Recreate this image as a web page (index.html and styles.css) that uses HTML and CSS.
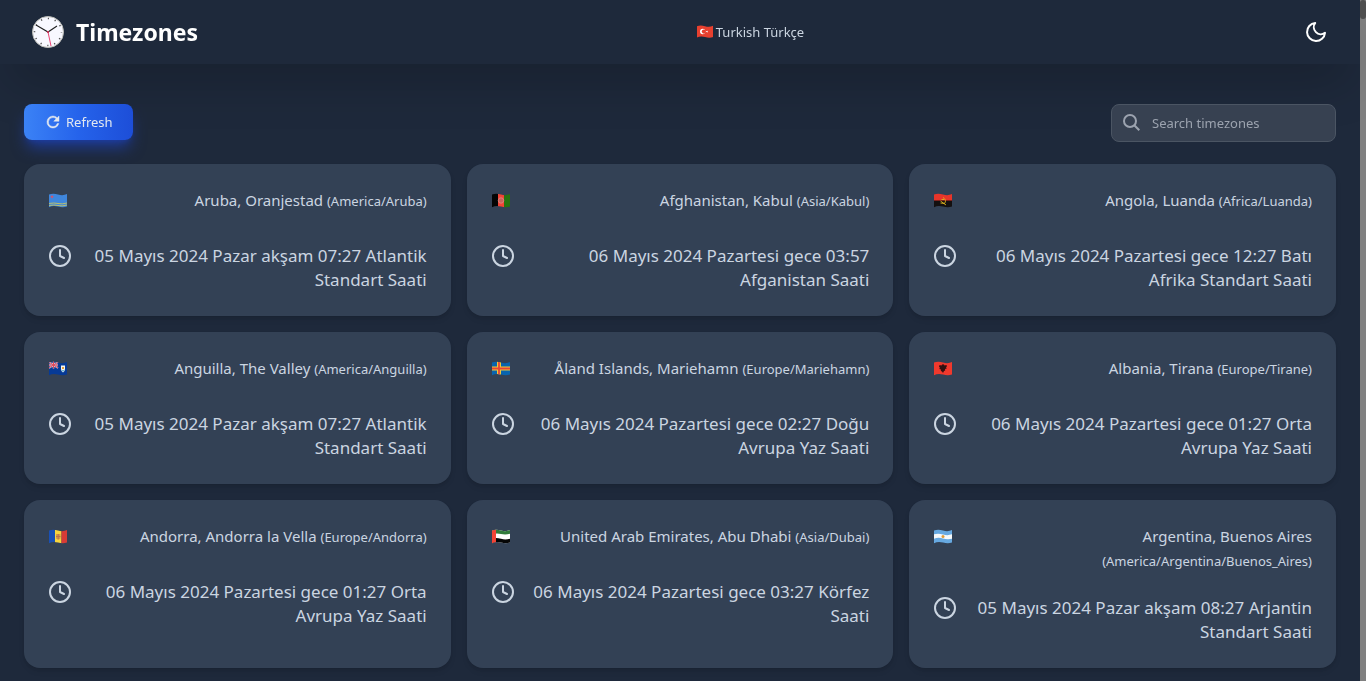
FILE: index.html
```html
<!DOCTYPE html>
<html lang="en">
<head>
<meta charset="utf-8">
<title>Timezones</title>
<link rel="stylesheet" href="styles.css">
</head>
<body>
<svg class="defs" aria-hidden="true">
  <symbol id="clock" viewBox="0 0 24 24"><circle cx="12" cy="12" r="10"/><path d="M12 6v6l4 2"/></symbol>
  <clipPath id="wave"><path d="M1 3.500Q5 2 10 3.500T19 3V15.500Q15 17 10 15.500T1 16.200Z"/></clipPath>
</svg>
<header class="header">
  <h1 class="brand">
    <svg class="logo" viewBox="0 0 32 32" aria-hidden="true">
      <circle cx="16" cy="16" r="15.500" fill="#f8f8ff" stroke="#bdbdb8"/>
      <circle cx="16" cy="16" r="13.500" fill="none" stroke="#555" stroke-width="1.600" stroke-dasharray="1.200 5.870" stroke-dashoffset=".6"/>
      <path d="M4 9l12 7 9-6" fill="none" stroke="#222" stroke-width="1.100"/>
      <path d="M15.800 15l3.200 15" stroke="#ec4474" stroke-width="1"/>
      <circle cx="16" cy="16" r="1" fill="#c02c50"/>
    </svg>
    <span>Timezones</span>
  </h1>
  <button class="language" type="button">
    <svg class="flag-small" viewBox="0 0 20 20" aria-hidden="true"><g clip-path="url(#wave)"><path fill="#e8402f" d="M0 0h20v20H0z"/><circle cx="7.500" cy="9.500" r="3" fill="#fff"/><circle cx="8.800" cy="9.500" r="2.400" fill="#e8402f"/><path fill="#fff" d="M10.500 9.500l2.500-1v2z"/></g></svg>
    <span>Turkish Türkçe</span>
  </button>
  <button class="theme" type="button" aria-label="Toggle theme">
    <svg class="line-icon" viewBox="0 0 24 24"><path d="M21 12.790A9 9 0 1 1 11.210 3 7 7 0 0 0 21 12.790z"/></svg>
  </button>
</header>
<main class="main">
  <div class="toolbar">
    <button class="refresh" type="button">
      <svg class="refresh-icon" viewBox="0 0 24 24" aria-hidden="true"><path fill="currentColor" stroke="currentColor" stroke-width=".6" d="M17.650 6.350A7.960 7.960 0 0 0 12 4a8 8 0 1 0 7.730 10h-2.080A6 6 0 1 1 12 6c1.660 0 3.140.690 4.220 1.780L13 11h7V4z"/></svg>
      <span>Refresh</span>
    </button>
    <label class="search">
      <svg class="search-icon" viewBox="0 0 20 20" aria-hidden="true"><circle cx="8" cy="8" r="6"/><path d="M12.300 12.300l5 5"/></svg>
      <input class="search-input" type="search" placeholder="Search timezones" aria-label="Search timezones">
    </label>
  </div>
  <section class="grid">
    <article class="card">
      <div class="place"><svg class="flag" viewBox="0 0 20 20"><g clip-path="url(#wave)"><path fill="#3f86dc" d="M0 0h20v20H0z"/><path stroke="#d9cd50" stroke-width=".8" d="M1 12.500q5-1 9 0t9-.5M1 14.500q5-1 9 0t9-.5" fill="none"/><path fill="#e84c58" d="M4 4l.6 1.200 1.200.6-1.200.6L4 7.600l-.6-1.200-1.200-.6 1.200-.6z"/></g></svg>
        <p class="name">Aruba, Oranjestad <small class="zone">(America/Aruba)</small></p></div>
      <div class="time"><svg class="line-icon"><use href="#clock"/></svg><time class="date">05 Mayıs 2024 Pazar akşam 07:27 Atlantik Standart Saati</time></div>
    </article>
    <article class="card">
      <div class="place"><svg class="flag" viewBox="0 0 20 20"><g clip-path="url(#wave)"><path fill="#050505" d="M0 0h7v20H0z"/><path fill="#f34335" d="M7 0h6v20H7z"/><path fill="#27720f" d="M13 0h7v20h-7z"/><circle cx="10" cy="9.500" r="2.700" fill="#c8635b" stroke="#e08078"/></g></svg>
        <p class="name">Afghanistan, Kabul <small class="zone">(Asia/Kabul)</small></p></div>
      <div class="time"><svg class="line-icon"><use href="#clock"/></svg><time class="date">06 Mayıs 2024 Pazartesi gece 03:57 Afganistan Saati</time></div>
    </article>
    <article class="card">
      <div class="place"><svg class="flag" viewBox="0 0 20 20"><g clip-path="url(#wave)"><path fill="#e8352a" d="M0 0h20v10H0z"/><path fill="#141010" d="M0 9.500h20V20H0z"/><path fill="none" stroke="#e0b51f" stroke-width=".9" d="M10 6.500q4 2.500 1.500 6l-4-.5M7.500 10l5.500 4M8.500 8.500h2.500"/></g></svg>
        <p class="name">Angola, Luanda <small class="zone">(Africa/Luanda)</small></p></div>
      <div class="time"><svg class="line-icon"><use href="#clock"/></svg><time class="date">06 Mayıs 2024 Pazartesi gece 12:27 Batı Afrika Standart Saati</time></div>
    </article>
    <article class="card">
      <div class="place"><svg class="flag" viewBox="0 0 20 20"><g clip-path="url(#wave)"><path fill="#063a96" d="M0 0h20v20H0z"/><path stroke="#d3cce0" stroke-width="1.600" d="M1 3l9 6M10 3L1 9M1 6h9M5.500 2v7.500"/><path stroke="#e04858" d="M1 6h9M5.500 2v7.500M1 3l9 6M10 3L1 9"/><path fill="#f5f5f0" d="M13 6.500h4v3.500q0 2.500-2 3.500Q13 12.500 13 10z"/><path fill="#e9a23b" d="M14 8h2v2h-2z"/><path fill="#69b5cf" d="M13.500 11h3l-1.500 2z"/></g></svg>
        <p class="name">Anguilla, The Valley <small class="zone">(America/Anguilla)</small></p></div>
      <div class="time"><svg class="line-icon"><use href="#clock"/></svg><time class="date">05 Mayıs 2024 Pazar akşam 07:27 Atlantik Standart Saati</time></div>
    </article>
    <article class="card">
      <div class="place"><svg class="flag" viewBox="0 0 20 20"><g clip-path="url(#wave)"><path fill="#0864ae" d="M0 0h20v20H0z"/><path stroke="#f4c832" stroke-width="4" d="M0 9.500h20M8 0v20"/><path stroke="#e64438" stroke-width="1.800" d="M0 9.500h20M8 0v20"/></g></svg>
        <p class="name">Åland Islands, Mariehamn <small class="zone">(Europe/Mariehamn)</small></p></div>
      <div class="time"><svg class="line-icon"><use href="#clock"/></svg><time class="date">06 Mayıs 2024 Pazartesi gece 02:27 Doğu Avrupa Yaz Saati</time></div>
    </article>
    <article class="card">
      <div class="place"><svg class="flag" viewBox="0 0 20 20"><g clip-path="url(#wave)"><path fill="#f0392d" d="M0 0h20v20H0z"/><path fill="#321111" d="M6.500 6l2 .5.8-1.500.7 1 .7-1 .8 1.500 2-.5.5 1.500-1 .5.700 1.500-1.700.5.200 1.500-1.200.5L10 14l-1-1.500-1.200-.5.200-1.500-1.700-.5L7 8.500 6 8z"/></g></svg>
        <p class="name">Albania, Tirana <small class="zone">(Europe/Tirane)</small></p></div>
      <div class="time"><svg class="line-icon"><use href="#clock"/></svg><time class="date">06 Mayıs 2024 Pazartesi gece 01:27 Orta Avrupa Yaz Saati</time></div>
    </article>
    <article class="card">
      <div class="place"><svg class="flag" viewBox="0 0 20 20"><g clip-path="url(#wave)"><path fill="#1a50b5" d="M0 0h7v20H0z"/><path fill="#f8d53e" d="M7 0h6.500v20H7z"/><path fill="#d83b36" d="M13.500 0H20v20h-6.500z"/><path fill="#d79a48" d="M8 7h4.500v4.500L10.200 13 8 11.500z"/><path stroke="#b8744d" d="M8 9.500h4.500M10.200 7v5"/></g></svg>
        <p class="name">Andorra, Andorra la Vella <small class="zone">(Europe/Andorra)</small></p></div>
      <div class="time"><svg class="line-icon"><use href="#clock"/></svg><time class="date">06 Mayıs 2024 Pazartesi gece 01:27 Orta Avrupa Yaz Saati</time></div>
    </article>
    <article class="card">
      <div class="place"><svg class="flag" viewBox="0 0 20 20"><g clip-path="url(#wave)"><path fill="#fff" d="M0 0h20v20H0z"/><path fill="#317b3b" d="M0 0h20v6.500q-5 1.500-10 .5T0 7.500z"/><path fill="#050505" d="M0 11.800q5-1.500 10 0t10-.5V20H0z"/><path fill="#f34335" d="M0 0h5v20H0z"/></g></svg>
        <p class="name">United Arab Emirates, Abu Dhabi <small class="zone">(Asia/Dubai)</small></p></div>
      <div class="time"><svg class="line-icon"><use href="#clock"/></svg><time class="date">06 Mayıs 2024 Pazartesi gece 03:27 Körfez Saati</time></div>
    </article>
    <article class="card">
      <div class="place"><svg class="flag" viewBox="0 0 20 20"><g clip-path="url(#wave)"><path fill="#67a9e1" d="M0 0h20v20H0z"/><path fill="#f7f9fa" d="M0 7.500q5-1.500 10 0t10-.5v4.500q-5 1.500-10 0t-10 .5z"/><circle cx="10" cy="9.500" r="1.500" fill="#e29b36"/></g></svg>
        <p class="name">Argentina, Buenos Aires <small class="zone">(America/Argentina/Buenos_Aires)</small></p></div>
      <div class="time"><svg class="line-icon"><use href="#clock"/></svg><time class="date">05 Mayıs 2024 Pazar akşam 08:27 Arjantin Standart Saati</time></div>
    </article>
  </section>
</main>
<div class="scroll-track" aria-hidden="true"><div class="scroll-thumb"></div></div>
</body>
</html>
```
FILE: styles.css
```css
* { box-sizing: border-box; }
body {
  margin: 0;
  padding-right: 6px;
  background: #1e293b;
  color: #cbd5e1;
  font: 15px/24px "Noto Sans", "Open Sans", sans-serif;
}
button { border: 0; padding: 0; background: none; color: inherit; font: inherit; cursor: pointer; }
h1, p { margin: 0; }
.defs { position: absolute; width: 0; height: 0; }
.header {
  position: relative;
  z-index: 1;
  display: grid;
  grid-template-columns: 1fr auto 1fr;
  align-items: center;
  min-height: 64px;
  padding: 0 32px;
  background: #1e293b;
  box-shadow: 0 25px 50px -12px rgba(0, 0, 0, .25);
}
.brand { display: flex; align-items: center; gap: 12px; color: #fff; font-size: 23px; line-height: 32px; font-weight: 700; }
.logo { width: 32px; height: 32px; }
.language { display: flex; align-items: center; gap: 2px; margin-left: 140px; font-size: 13px; line-height: 20px; }
.flag-small { width: 18px; height: 18px; }
.theme { display: flex; justify-self: end; color: #fff; }
.line-icon {
  flex: none;
  width: 24px;
  height: 24px;
  fill: none;
  stroke: currentColor;
  stroke-width: 2;
  stroke-linecap: round;
  stroke-linejoin: round;
}
.main { padding: 40px 24px 16px; }
.toolbar { display: flex; justify-content: space-between; align-items: flex-start; margin-bottom: 22px; position: relative; z-index: 2; }
.refresh {
  display: flex;
  align-items: center;
  gap: 4px;
  height: 36px;
  padding: 0 20px;
  border-radius: 8px;
  background: linear-gradient(to right, #3b82f6, #2563eb, #1d4ed8);
  box-shadow: 0 10px 15px -3px rgba(30, 64, 175, .8), 0 4px 6px -4px rgba(30, 64, 175, .8);
  color: #e2e8f0;
  font-size: 13px;
  line-height: 20px;
}
.refresh-icon { width: 18px; height: 18px; }
.search {
  display: flex;
  align-items: center;
  gap: 10px;
  width: 225px;
  height: 38px;
  padding: 0 10px;
  border: 1px solid #4b5563;
  border-radius: 8px;
  background: #374151;
}
.search-icon { flex: none; width: 20px; height: 20px; fill: none; stroke: #9ca3af; stroke-width: 2; }
.search-input { flex: 1; min-width: 0; border: 0; padding: 0; outline: 0; background: none; color: #fff; font: 13px/20px "Noto Sans", "Open Sans", sans-serif; }
.search-input::placeholder { color: #9ca3af; }
.grid { display: grid; grid-template-columns: repeat(3, 1fr); gap: 16px; }
.card {
  padding: 24px;
  border-radius: 16px;
  background: #334155;
  box-shadow: 0 4px 6px -1px rgba(0, 0, 0, .1), 0 2px 4px -2px rgba(0, 0, 0, .1);
}
.place { display: flex; justify-content: space-between; gap: 12px; min-height: 32px; margin-bottom: 24px; }
.flag { flex: none; width: 20px; height: 26px; }
.name { text-align: right; }
.zone { font-size: 13px; line-height: 20px; }
.time { display: flex; justify-content: space-between; gap: 12px; }
.date { font-size: 17px; text-align: right; }
.scroll-track { position: fixed; top: 0; right: 0; bottom: 0; width: 6px; background: #808080; }
.scroll-thumb { height: 19px; border-radius: 3px; background: #4f4f4f; }
```
